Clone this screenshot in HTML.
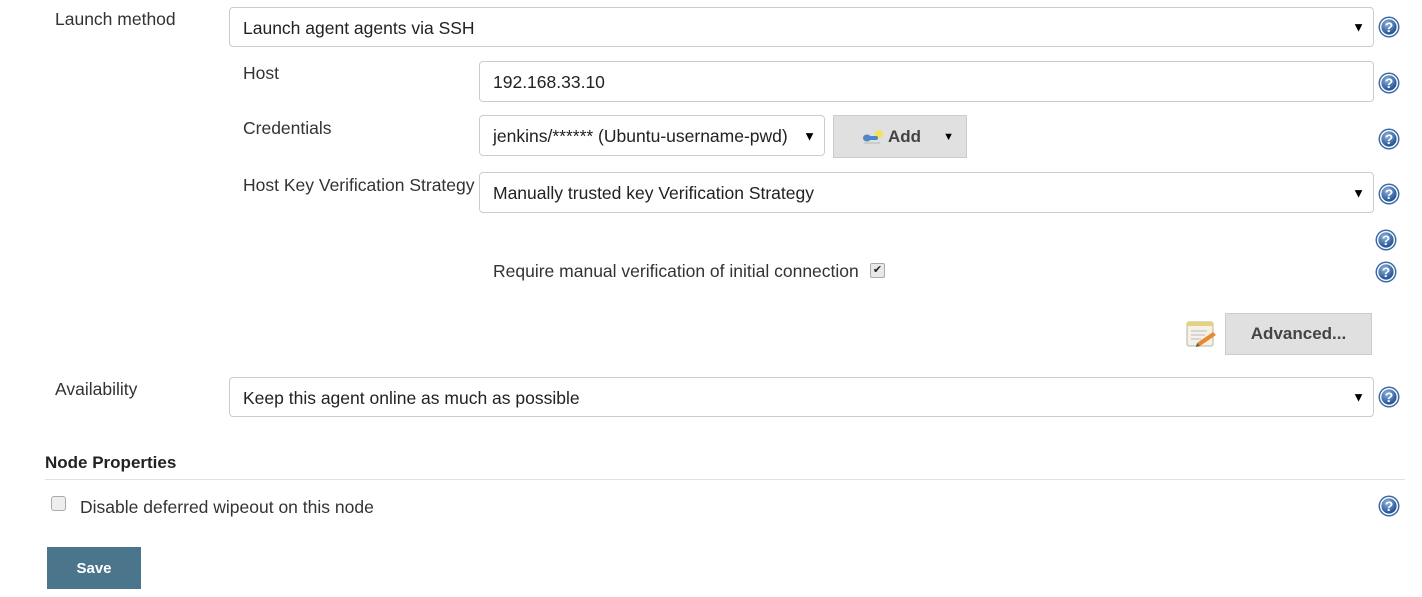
<!DOCTYPE html>
<html><head><style>
body{margin:0;width:1422px;height:597px;background:#fff;font-family:"Liberation Sans",Arial,sans-serif;color:#333;position:relative;overflow:hidden}
.a{position:absolute}
.lbl{font-size:17.5px;line-height:18px}
.sel{position:absolute;border:1px solid #ccc;border-radius:4px;background:#fff;font-size:17.5px;box-sizing:border-box;padding-left:13px;padding-top:2px;display:flex;align-items:center;color:#222}
.sel .ar{position:absolute;right:8px;top:50%;transform:translateY(-50%);font-size:13px;color:#000}
.btn{position:absolute;background:#e0e0e0;border:1px solid #ccc;box-sizing:border-box;font-weight:bold;font-size:17px;color:#444;display:flex;align-items:center;justify-content:center}
.help{position:absolute;width:22px;height:22px}
</style></head><body>
<svg width="0" height="0" style="position:absolute"><defs>
<radialGradient id="g" cx="40%" cy="30%" r="70%"><stop offset="0" stop-color="#8fb3dd"/><stop offset="1" stop-color="#1f4f91"/></radialGradient>
<symbol id="h" viewBox="0 0 22 22"><circle cx="11" cy="11" r="10.5" fill="#3d6aa6"/><circle cx="11" cy="11" r="9" fill="#fff"/><circle cx="11" cy="11" r="7.6" fill="url(#g)"/><text x="11" y="16" text-anchor="middle" font-family="Liberation Sans" font-weight="bold" font-size="14" fill="#fff">?</text></symbol>
</defs></svg>

<div class="a lbl" style="left:55px;top:10px">Launch method</div>
<div class="sel" style="left:229px;top:7px;width:1145px;height:40px">Launch agent agents via SSH<span class="ar">▼</span></div>

<div class="a lbl" style="left:243px;top:64px">Host</div>
<div class="sel" style="left:479px;top:61px;width:895px;height:41px">192.168.33.10</div>

<div class="a lbl" style="left:243px;top:119px">Credentials</div>
<div class="sel" style="left:479px;top:115px;width:346px;height:41px">jenkins/****** (Ubuntu-username-pwd)<span class="ar">▼</span></div>
<div class="btn" style="left:833px;top:115px;width:134px;height:43px;justify-content:flex-start;padding-left:28px">
<svg width="24" height="16" viewBox="0 0 24 16"><circle cx="17" cy="5" r="4" fill="#f2e35a"/><rect x="2" y="7" width="14" height="4" rx="2" fill="#4f86c6"/><ellipse cx="5" cy="9" rx="4" ry="3.5" fill="#4f86c6"/><rect x="2" y="13" width="16" height="2" fill="#ccc"/></svg>
<span style="margin-left:2px">Add</span><span style="position:absolute;right:12px;font-size:11px;color:#000">▼</span></div>

<div class="a lbl" style="left:243px;top:176px">Host Key Verification Strategy</div>
<div class="sel" style="left:479px;top:172px;width:895px;height:41px">Manually trusted key Verification Strategy<span class="ar">▼</span></div>

<div class="a lbl" style="left:493px;top:262px">Require manual verification of initial connection</div>
<div class="a" style="left:870px;top:263px;width:13px;height:13px;border:1px solid #aaa;border-radius:2px;background:#e8e8e8;font-size:11px;line-height:13px;text-align:center;color:#222">✔</div>

<svg class="a" style="left:1185px;top:319px" width="32" height="30" viewBox="0 0 32 30"><rect x="2" y="3" width="26" height="24" rx="2" fill="#f4f1e8" stroke="#b8b2a0"/><rect x="2" y="3" width="26" height="4" fill="#e6d27a"/><line x1="6" y1="12" x2="22" y2="12" stroke="#bbb"/><line x1="6" y1="16" x2="20" y2="16" stroke="#bbb"/><line x1="6" y1="20" x2="16" y2="20" stroke="#bbb"/><path d="M12 24 L28 13 L31 16 L15 27 Z" fill="#e8892e"/><path d="M12 24 L15 27 L11 28Z" fill="#555"/></svg>
<div class="btn" style="left:1225px;top:313px;width:147px;height:42px">Advanced...</div>

<div class="a lbl" style="left:55px;top:380px">Availability</div>
<div class="sel" style="left:229px;top:377px;width:1145px;height:40px">Keep this agent online as much as possible<span class="ar">▼</span></div>

<div class="a" style="left:45px;top:453px;font-size:17px;font-weight:bold;color:#222">Node Properties</div>
<div class="a" style="left:45px;top:479px;width:1360px;height:1px;background:#e2e2e2"></div>

<div class="a" style="left:51px;top:496px;width:13px;height:13px;border:1px solid #aaa;border-radius:3px;background:#eee"></div>
<div class="a lbl" style="left:80px;top:498px">Disable deferred wipeout on this node</div>

<div class="a" style="left:47px;top:547px;width:94px;height:42px;background:#4b758b;color:#fff;font-weight:bold;font-size:15px;display:flex;align-items:center;justify-content:center">Save</div>

<svg class="help" style="left:1378px;top:16px"><use href="#h"/></svg>
<svg class="help" style="left:1378px;top:72px"><use href="#h"/></svg>
<svg class="help" style="left:1378px;top:128px"><use href="#h"/></svg>
<svg class="help" style="left:1378px;top:183px"><use href="#h"/></svg>
<svg class="help" style="left:1375px;top:229px"><use href="#h"/></svg>
<svg class="help" style="left:1375px;top:261px"><use href="#h"/></svg>
<svg class="help" style="left:1378px;top:386px"><use href="#h"/></svg>
<svg class="help" style="left:1378px;top:495px"><use href="#h"/></svg>
</body></html>
